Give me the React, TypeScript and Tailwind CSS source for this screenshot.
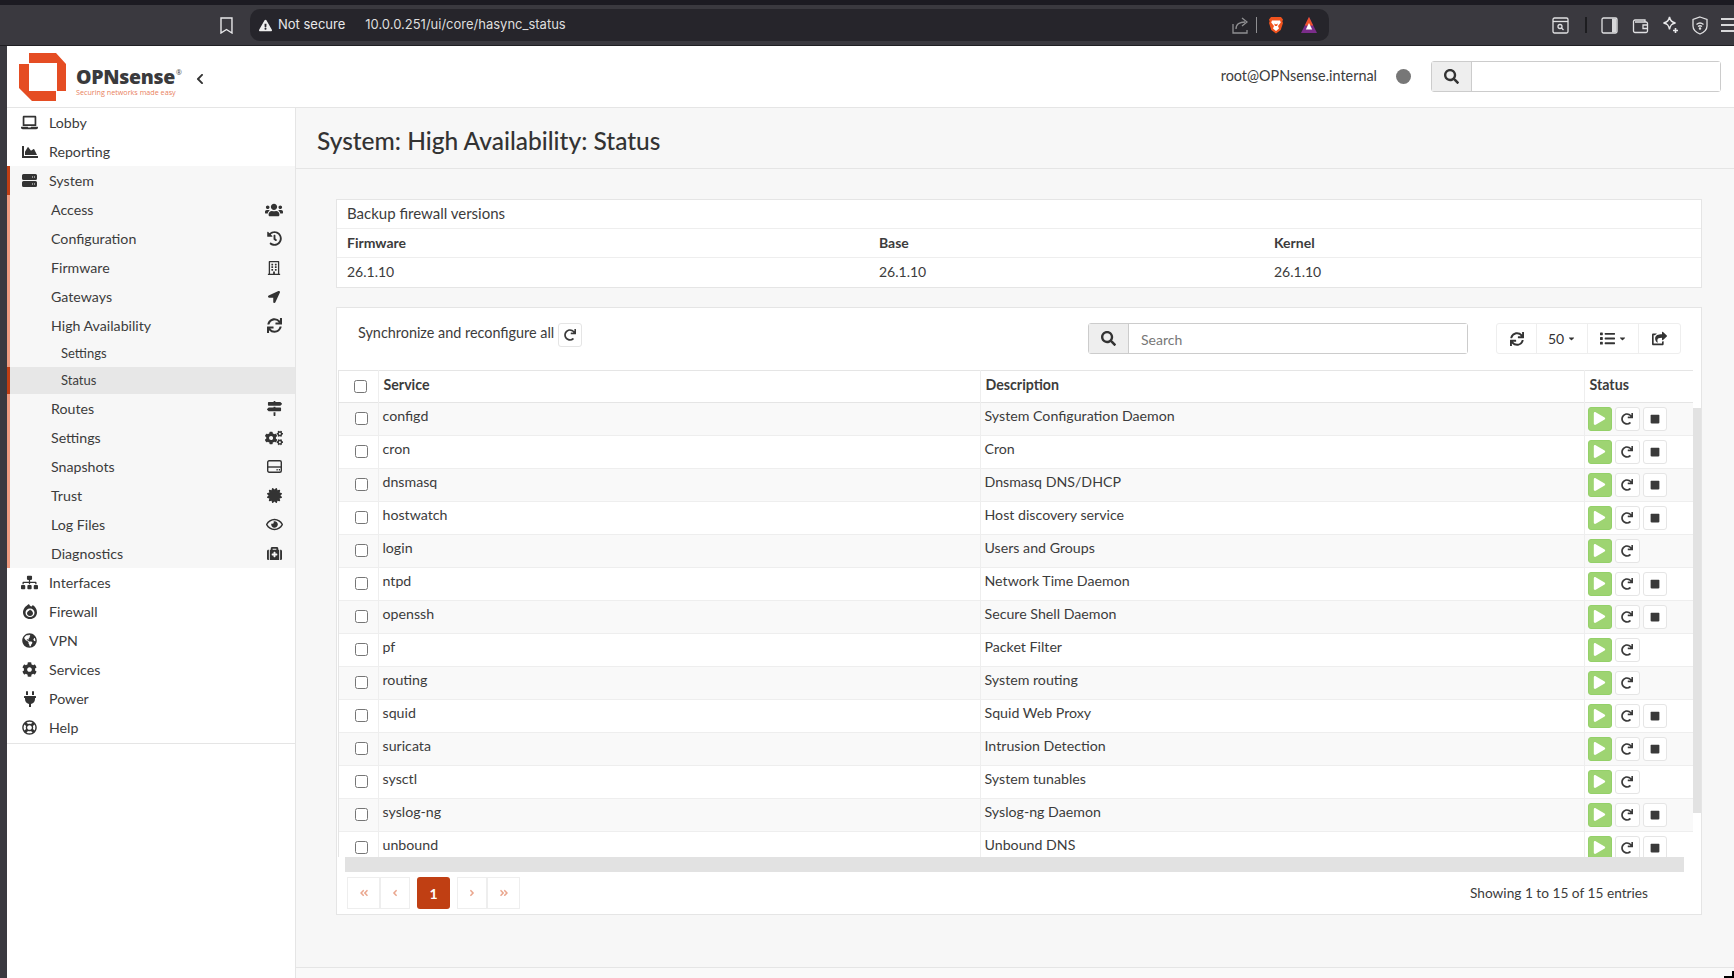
import React from "react";
import {
  FaLaptop, FaChartArea, FaUsers, FaHistory, FaRegBuilding, FaLocationArrow, FaSync, FaMapSigns, FaCogs,
  FaCertificate, FaRegEye, FaMedkit, FaSitemap, FaGlobeAmericas, FaCog, FaPlug, FaRegLifeRing,
  FaSearch, FaRedo, FaPlay, FaStop, FaShareSquare, FaList, FaExclamationTriangle, FaCaretDown, FaAngleDoubleLeft,
  FaAngleLeft, FaAngleRight, FaAngleDoubleRight, FaChevronLeft,
} from "react-icons/fa";

type IconT = React.ComponentType<{ className?: string }>;

function DriveIcon({ className }: { className?: string }) {
  return (
    <svg className={className} width="15" height="13" viewBox="0 0 15 13" fill="none" stroke="currentColor" strokeWidth="1.4">
      <rect x=".7" y=".7" width="13.600" height="11.600" rx="1.500" />
      <path d="M1 7h13" />
      <path d="M9.500 9.700h1.200M11.800 9.700h1.200" />
    </svg>
  );
}

function FlameIcon({ className }: { className?: string }) {
  return (
    <svg className={className} width="14" height="15" viewBox="0 0 14 15" fill="currentColor">
      <path d="M6 0c.3 1.300 1.200 2 2.200 2.500.8-.3 1.300-.8 1.500-1.500C12 2.500 14 5 14 8.500 14 12.300 10.900 15 7 15S0 12.300 0 8.500C0 4.800 2.800 2 6 0zm1 4.500C4.500 4.500 2.500 6.400 2.500 8.800S4.500 13 7 13s4.500-1.800 4.500-4.200S9.500 4.500 7 4.500z" />
      <path d="M7.200 5.500c.3 1 1 1.300 1.400 1 .9 1 1.400 1.900 1.400 2.800 0 1.600-1.300 2.700-3 2.700s-3-1.100-3-2.700c0-1.800 1.800-2.500 3.200-3.800z" />
    </svg>
  );
}

function ServerBars({ className }: { className?: string }) {
  return (
    <svg className={className} width="15" height="13" viewBox="0 0 15 13" fill="currentColor">
      <path fillRule="evenodd" d="M1.500 0h12A1.500 1.500 0 0 1 15 1.500v3A1.500 1.500 0 0 1 13.500 6h-12A1.500 1.500 0 0 1 0 4.500v-3A1.500 1.500 0 0 1 1.500 0zM10 2.500v1h1v-1zm2 0v1h1v-1z" />
      <path fillRule="evenodd" d="M1.500 7h12A1.500 1.500 0 0 1 15 8.500v3a1.500 1.500 0 0 1-1.500 1.500h-12A1.500 1.500 0 0 1 0 11.500v-3A1.500 1.500 0 0 1 1.500 7zM10 9.500v1h1v-1zm2 0v1h1v-1z" />
    </svg>
  );
}

function TopItem({ icon: Icon, label, active, size = "text-[16px]" }: { icon: IconT; label: string; active?: boolean; size?: string }) {
  return (
    <div className={`flex h-[29px] items-center ${active ? "border-l-[3px] border-[#c03e14] bg-[#f7f7f7] pl-[6px]" : "pl-[9px]"}`}>
      <span className="flex w-[27px] justify-center text-[#333]"><Icon className={size} /></span>
      <span className="ml-[6px] text-[14.200px] text-[#3c3c3c]">{label}</span>
    </div>
  );
}

function SubItem({ icon: Icon, label, size = "text-[15px]" }: { icon: IconT; label: string; size?: string }) {
  return (
    <div className="flex h-[29px] items-center justify-between border-l-[3px] border-[#ef9c80] bg-[#f7f7f7] pl-[41px] pr-[11px]">
      <span className="text-[14.200px] text-[#3c3c3c]">{label}</span>
      <span className="flex w-[20px] justify-center text-[#333]"><Icon className={size} /></span>
    </div>
  );
}

function Sidebar() {
  return (
    <aside className="w-[289px] shrink-0 border-r border-[#e5e5e5] bg-white">
      <TopItem icon={FaLaptop} label="Lobby" size="text-[17px]" />
      <TopItem icon={FaChartArea} label="Reporting" />
      <TopItem icon={ServerBars} label="System" active />
      <SubItem icon={FaUsers} label="Access" size="text-[18px]" />
      <SubItem icon={FaHistory} label="Configuration" />
      <SubItem icon={FaRegBuilding} label="Firmware" size="text-[14px]" />
      <SubItem icon={FaLocationArrow} label="Gateways" size="text-[12px]" />
      <SubItem icon={FaSync} label="High Availability" />
      <div className="flex h-[27px] items-center border-l-[3px] border-[#ef9c80] bg-[#f7f7f7] pl-[51px] text-[13px] text-[#3c3c3c]">Settings</div>
      <div className="flex h-[27px] items-center border-l-[3px] border-[#c03e14] bg-[#e7e7e7] pl-[51px] text-[13px] text-[#3c3c3c]">Status</div>
      <SubItem icon={FaMapSigns} label="Routes" />
      <SubItem icon={FaCogs} label="Settings" size="text-[18px]" />
      <SubItem icon={DriveIcon} label="Snapshots" />
      <SubItem icon={FaCertificate} label="Trust" />
      <SubItem icon={FaRegEye} label="Log Files" size="text-[17px]" />
      <SubItem icon={FaMedkit} label="Diagnostics" />
      <TopItem icon={FaSitemap} label="Interfaces" size="text-[17px]" />
      <TopItem icon={FlameIcon} label="Firewall" />
      <TopItem icon={FaGlobeAmericas} label="VPN" size="text-[15px]" />
      <TopItem icon={FaCog} label="Services" size="text-[15px]" />
      <TopItem icon={FaPlug} label="Power" />
      <TopItem icon={FaRegLifeRing} label="Help" size="text-[15px]" />
      <div className="mt-[1px] border-b border-[#e5e5e5]" />
    </aside>
  );
}

function BrowserChrome() {
  return (
    <header className="h-[46px] shrink-0 border-b border-[#1f1f23] bg-[#3a393f]">
      <div className="h-[5px] bg-[#1c1b22]" />
      <div className="flex h-[40px] items-center text-[#e8e8ea]">
        <svg className="ml-[220px] h-[17px] w-[13px]" viewBox="0 0 13 17" fill="none" stroke="#e8e8ea" strokeWidth="1.4"><path d="M1 1h11v15l-5.500-3.500L1 16z" /></svg>
        <div className="ml-[17px] flex h-[32px] w-[1082px] items-center rounded-[10px] bg-[#26252b] pl-[9px] pr-[12px]">
          <FaExclamationTriangle className="text-[13px] text-[#eee]" />
          <span className="ml-[6px] font-[Inter,sans-serif] text-[13px]">Not secure</span>
          <span className="ml-[20px] font-[Inter,sans-serif] text-[13px] text-[#dedede]">10.0.0.251/ui/core/hasync_status</span>
          <div className="ml-auto flex items-center">
            <svg className="h-[17px] w-[16px]" viewBox="0 0 16 17" fill="none" stroke="#8f8f92" strokeWidth="1.3"><path d="M1 7v9h14v-3" /><path d="M4 12c0-5 4-7 9-7M10 1l5 4-5 4" /></svg>
            <div className="ml-[8px] h-[16px] w-px bg-[#8f8f92]" />
            <svg className="ml-[11px] h-[18px] w-[16px]" viewBox="0 0 16 18">
              <path d="M3 1h10l2 2.500-.6 2 .6 1.500-2.300 7L8 17.500 3.300 14 1 7l.6-1.500L1 3.500z" fill="#f0531e" />
              <path d="M4 4.500h8l.8 2-2.800 3.500 1 2.500L8 15l-3-2.500 1-2.500L3.200 6.500z" fill="#fff" />
              <path d="M6 7.500l1.500.7h1L10 7.500 9 10H7z" fill="#f0531e" />
            </svg>
            <svg className="ml-[17px] h-[16px] w-[16px]" viewBox="0 0 16 16">
              <path d="M8 0l8 16H0z" fill="#7b2d8b" />
              <path d="M8 0l4.200 8.500H3.800z" fill="#f0532b" />
              <path d="M8 6l3.200 6.500H4.800z" fill="#fff" />
            </svg>
          </div>
        </div>
        <div className="ml-[223px] flex items-center">
          <svg className="h-[17px] w-[17px]" viewBox="0 0 17 17" fill="none" stroke="#e0e0e2" strokeWidth="1.3"><rect x="1" y="1" width="15" height="15" rx="1.500" /><path d="M1 4.500h15" /><circle cx="8" cy="9.500" r="2" /><path d="M9.500 11l2 2" /></svg>
          <div className="ml-[16px] h-[16px] w-[2px] bg-[#1d1d20]" />
          <svg className="ml-[14px] h-[17px] w-[17px]" viewBox="0 0 17 17"><rect x="1" y="1" width="15" height="15" rx="1.500" fill="none" stroke="#e0e0e2" strokeWidth="1.3" /><rect x="11" y="1.500" width="4.500" height="14" fill="#d8d8da" /></svg>
          <svg className="ml-[14px] h-[17px] w-[17px]" viewBox="0 0 17 17" fill="none" stroke="#e0e0e2" strokeWidth="1.3"><path d="M3 3h10v2M1.500 4.500c0-1 .7-1.500 1.500-1.500M1.500 4.500V14a1.500 1.500 0 0 0 1.500 1.500h11a1.500 1.500 0 0 0 1.500-1.500V6.500a1.500 1.500 0 0 0-1.500-1.500H3" /><path d="M15.500 8H11v3.500h4.500" /></svg>
          <svg className="ml-[13px] h-[18px] w-[17px]" viewBox="0 0 17 18" fill="none" stroke="#e8e8ea" strokeWidth="1.4"><path d="M7.500 1c.8 4 2.200 5.300 6 6-3.800.8-5.200 2-6 6.500C6.700 9 5.300 7.800 1.500 7c3.800-.7 5.200-2 6-6z" /><path d="M13.500 12v5M11 14.500h5" strokeWidth="1.600" /></svg>
          <svg className="ml-[13px] h-[19px] w-[16px]" viewBox="0 0 16 19" fill="none" stroke="#e0e0e2" strokeWidth="1.3"><path d="M8 1l7 2.500V10c0 4-3.500 6.500-7 8-3.500-1.500-7-4-7-8V3.500z" /><path d="M4.500 8.500c2-1.700 5-1.700 7 0M6 10.500c1.200-.9 2.800-.9 4 0" /><circle cx="8" cy="12.500" r=".6" /></svg>
          <div className="ml-[13px] flex w-[13px] flex-col gap-[4px]">
            <div className="h-[2px] bg-[#d8d8da]" /><div className="h-[2px] bg-[#d8d8da]" /><div className="h-[2px] bg-[#d8d8da]" />
          </div>
        </div>
      </div>
    </header>
  );
}

function Logo() {
  return (
    <div className="flex items-center">
      <svg className="ml-[12px] mt-[1px] h-[48px] w-[47px]" viewBox="0 0 47 48" fill="#e54d23">
        <path d="M10 0h27l10 11v27h-9V10H10z" />
        <path d="M0 11h10v27h27v10H13L0 35z" />
      </svg>
      <div className="ml-[10px] mt-[11px] flex w-[102px] flex-col">
        <div className="flex h-[20px] items-start font-['Open_Sans',sans-serif] leading-[20px] text-[#3a3a3c]">
          <span className="text-[19.500px] font-extrabold tracking-[-0.3px]">OPNsense</span>
          <span className="ml-[1px] text-[7px] leading-[12px]">®</span>
        </div>
        <div className="whitespace-nowrap font-['Open_Sans',sans-serif] text-[7.200px] leading-[10px] text-[#e97f60]">Securing networks made easy</div>
      </div>
      <FaChevronLeft className="ml-[16px] mt-[5px] text-[12px] text-[#333]" />
    </div>
  );
}

function PageHeader() {
  return (
    <div className="flex h-[62px] shrink-0 items-center border-b border-[#e5e5e5] bg-white pb-[1px]">
      <Logo />
      <div className="ml-auto flex items-center">
        <span className="text-[14.400px] text-[#3c3c3c]">root@OPNsense.internal</span>
        <span className="ml-[19px] h-[15px] w-[15px] rounded-full bg-[#777]" />
        <div className="ml-[20px] mr-[13px] flex h-[31px] w-[290px] rounded-[3px] border border-[#ccc]">
          <span className="flex w-[40px] items-center justify-center border-r border-[#ccc] bg-[#eee] text-[#333]"><FaSearch className="text-[15px]" /></span>
          <span className="flex-1 bg-white" />
        </div>
      </div>
    </div>
  );
}

function VersionCard() {
  return (
    <section className="w-[1366px] border border-[#e5e5e5] bg-white text-[14px] text-[#3c3c3c]">
      <div className="flex h-[29px] items-center border-b border-[#eee] px-[10px] pb-[2px] text-[15px]">Backup firewall versions</div>
      <div className="flex h-[29px] items-center border-b border-[#eee] px-[10px] pb-[2px] font-bold">
        <span className="w-[532px]">Firmware</span><span className="w-[395px]">Base</span><span>Kernel</span>
      </div>
      <div className="flex h-[29px] items-center px-[10px] pb-[2px]">
        <span className="w-[532px]">26.1.10</span><span className="w-[395px]">26.1.10</span><span>26.1.10</span>
      </div>
    </section>
  );
}

function SmallBtn({ children, w = 24 }: { children: React.ReactNode; w?: number }) {
  return (
    <span className={`flex h-[24px] items-center justify-center rounded-[3px] border border-[#e5e5e5] bg-white text-[#3a3a3a] ${w === 25 ? "w-[25px]" : "w-[24px]"}`}>
      {children}
    </span>
  );
}

const rows: [string, string, boolean][] = [
  ["configd", "System Configuration Daemon", true],
  ["cron", "Cron", true],
  ["dnsmasq", "Dnsmasq DNS/DHCP", true],
  ["hostwatch", "Host discovery service", true],
  ["login", "Users and Groups", false],
  ["ntpd", "Network Time Daemon", true],
  ["openssh", "Secure Shell Daemon", true],
  ["pf", "Packet Filter", false],
  ["routing", "System routing", false],
  ["squid", "Squid Web Proxy", true],
  ["suricata", "Intrusion Detection", true],
  ["sysctl", "System tunables", false],
  ["syslog-ng", "Syslog-ng Daemon", true],
  ["unbound", "Unbound DNS", true],
];

function ServiceTable() {
  return (
    <div className="flex h-[487px] overflow-hidden">
      <div className="ml-px w-[1355px] shrink-0 overflow-hidden border-l border-[#e5e5e5]">
        <table className="w-[1355px] table-fixed border-collapse text-[14.200px] text-[#3c3c3c]">
          <colgroup>
            <col className="w-[39px]" /><col className="w-[602px]" /><col className="w-[604px]" /><col className="w-[110px]" />
          </colgroup>
          <thead>
            <tr className="h-[32px] border-y border-[#e5e5e5] font-bold">
              <th className="border-r border-[#eee] pl-[15px] text-left align-middle"><input type="checkbox" className="block h-[13px] w-[13px]" /></th>
              <th className="border-r border-[#eee] pb-[3px] pl-[5px] text-left font-bold">Service</th>
              <th className="border-r border-[#eee] pb-[3px] pl-[5px] text-left font-bold">Description</th>
              <th className="border-r border-[#e5e5e5] pb-[3px] pl-[5px] text-left font-bold">Status</th>
            </tr>
          </thead>
          <tbody>
            {rows.map(([name, desc, stop], i) => (
              <tr key={name} className={`h-[33px] border-b border-[#eee] ${i % 2 === 0 ? "bg-[#f9f9f9]" : "bg-white"}`}>
                <td className="border-r border-[#eee] pb-[2px] pl-[16px] align-middle"><input type="checkbox" className="block h-[13px] w-[13px]" /></td>
                <td className="border-r border-[#eee] pb-[7px] pl-[4px] align-middle">{name}</td>
                <td className="border-r border-[#eee] pb-[7px] pl-[4px] align-middle">{desc}</td>
                <td className="pb-[1px] pl-[3px] align-middle">
                  <div className="flex items-center">
                    <span className="flex h-[24px] w-[24px] items-center justify-center rounded-[3px] border border-[#94d069] bg-[#9ed472] text-white"><FaPlay className="text-[13px]" /></span>
                    <span className="ml-[3px]"><SmallBtn w={25}><FaRedo className="text-[12px]" /></SmallBtn></span>
                    {stop && <span className="ml-[3px]"><SmallBtn><FaStop className="text-[10px]" /></SmallBtn></span>}
                  </div>
                </td>
              </tr>
            ))}
          </tbody>
        </table>
      </div>
      <div className="w-[9px] pt-[38px]"><div className="h-[405px] w-[9px] bg-[#e2e2e2]" /></div>
    </div>
  );
}

function PageBtn({ children, active, w }: { children: React.ReactNode; active?: boolean; w: string }) {
  return (
    <span className={`flex h-[32px] items-center justify-center text-[10px] ${w} ${active ? "rounded-[3px] bg-[#c03f13] text-[14px] font-bold text-white" : "border border-[#eee] bg-white text-[#eaa78f]"}`}>
      {children}
    </span>
  );
}

function ServiceCard() {
  return (
    <section className="mt-[19px] h-[608px] w-[1366px] border border-[#e5e5e5] bg-white text-[14px] text-[#3c3c3c]">
      <div className="flex h-[62px] items-start pt-[15px]">
        <span className="-mt-px ml-[21px] text-[14.400px]">Synchronize and reconfigure all</span>
        <span className="ml-[4px]"><SmallBtn><FaRedo className="text-[12px]" /></SmallBtn></span>
        <div className="ml-auto flex">
          <div className="flex h-[31px] w-[380px] rounded-[3px] border border-[#ccc]">
            <span className="flex w-[40px] items-center justify-center border-r border-[#ccc] bg-[#eee] text-[#333]"><FaSearch className="text-[15px]" /></span>
            <span className="flex flex-1 items-center bg-white pl-[12px] pt-[2px] text-[#777]">Search</span>
          </div>
          <div className="ml-[28px] mr-[20px] flex h-[31px] w-[185px] rounded-[3px] border border-[#eee] text-[#333]">
            <span className="flex w-[40px] items-center justify-center border-r border-[#eee]"><FaSync className="text-[14px]" /></span>
            <span className="flex w-[51px] items-center justify-center gap-[3px] border-r border-[#eee]">50<FaCaretDown className="text-[9px]" /></span>
            <span className="flex w-[51px] items-center justify-center gap-[3px] border-r border-[#eee]"><FaList className="text-[15px]" /><FaCaretDown className="text-[9px]" /></span>
            <span className="flex flex-1 items-center justify-center"><FaShareSquare className="text-[15px]" /></span>
          </div>
        </div>
      </div>
      <ServiceTable />
      <div className="ml-[8px] h-[15px] w-[1339px] bg-[#e2e2e2]" />
      <div className="flex h-[37px] items-start pt-[5px]">
        <div className="ml-[10px] flex">
          <PageBtn w="w-[33px]"><FaAngleDoubleLeft /></PageBtn>
          <PageBtn w="w-[30px]"><FaAngleLeft /></PageBtn>
          <span className="ml-[7px]"><PageBtn active w="w-[33px]">1</PageBtn></span>
          <span className="ml-[7px]"><PageBtn w="w-[30px]"><FaAngleRight /></PageBtn></span>
          <PageBtn w="w-[33px]"><FaAngleDoubleRight /></PageBtn>
        </div>
        <span className="ml-auto mr-[53px] mt-[6px] text-[13.700px]">Showing 1 to 15 of 15 entries</span>
      </div>
    </section>
  );
}

export default function App() {
  return (
    <div className="relative flex h-[978px] w-[1734px] flex-col overflow-hidden bg-[#3a393f] font-[Lato,sans-serif]">
      <BrowserChrome />
      <div className="flex min-h-0 flex-1">
        <div className="w-[7px] shrink-0" />
        <div className="flex min-w-0 flex-1 flex-col bg-[#f7f7f7]">
          <PageHeader />
          <div className="flex min-h-0 flex-1">
            <Sidebar />
            <main className="flex min-w-0 flex-1 flex-col">
              <div className="flex h-[61px] shrink-0 items-center border-b border-[#e5e5e5] pl-[21px] pt-[6px] text-[24.500px] font-medium text-[#333]">System: High Availability: Status</div>
              <div className="h-[798px] shrink-0 pl-[40px] pt-[30px]">
                <VersionCard />
                <ServiceCard />
              </div>
              <div className="flex-1 border-t border-[#e5e5e5] bg-[#f9f9f9]" />
            </main>
          </div>
        </div>
      </div>
      <svg className="absolute bottom-0 right-0 h-[10px] w-[10px]" viewBox="0 0 10 10" fill="none" stroke="#000" strokeWidth="2"><path d="M0 9h9V3" /></svg>
    </div>
  );
}
